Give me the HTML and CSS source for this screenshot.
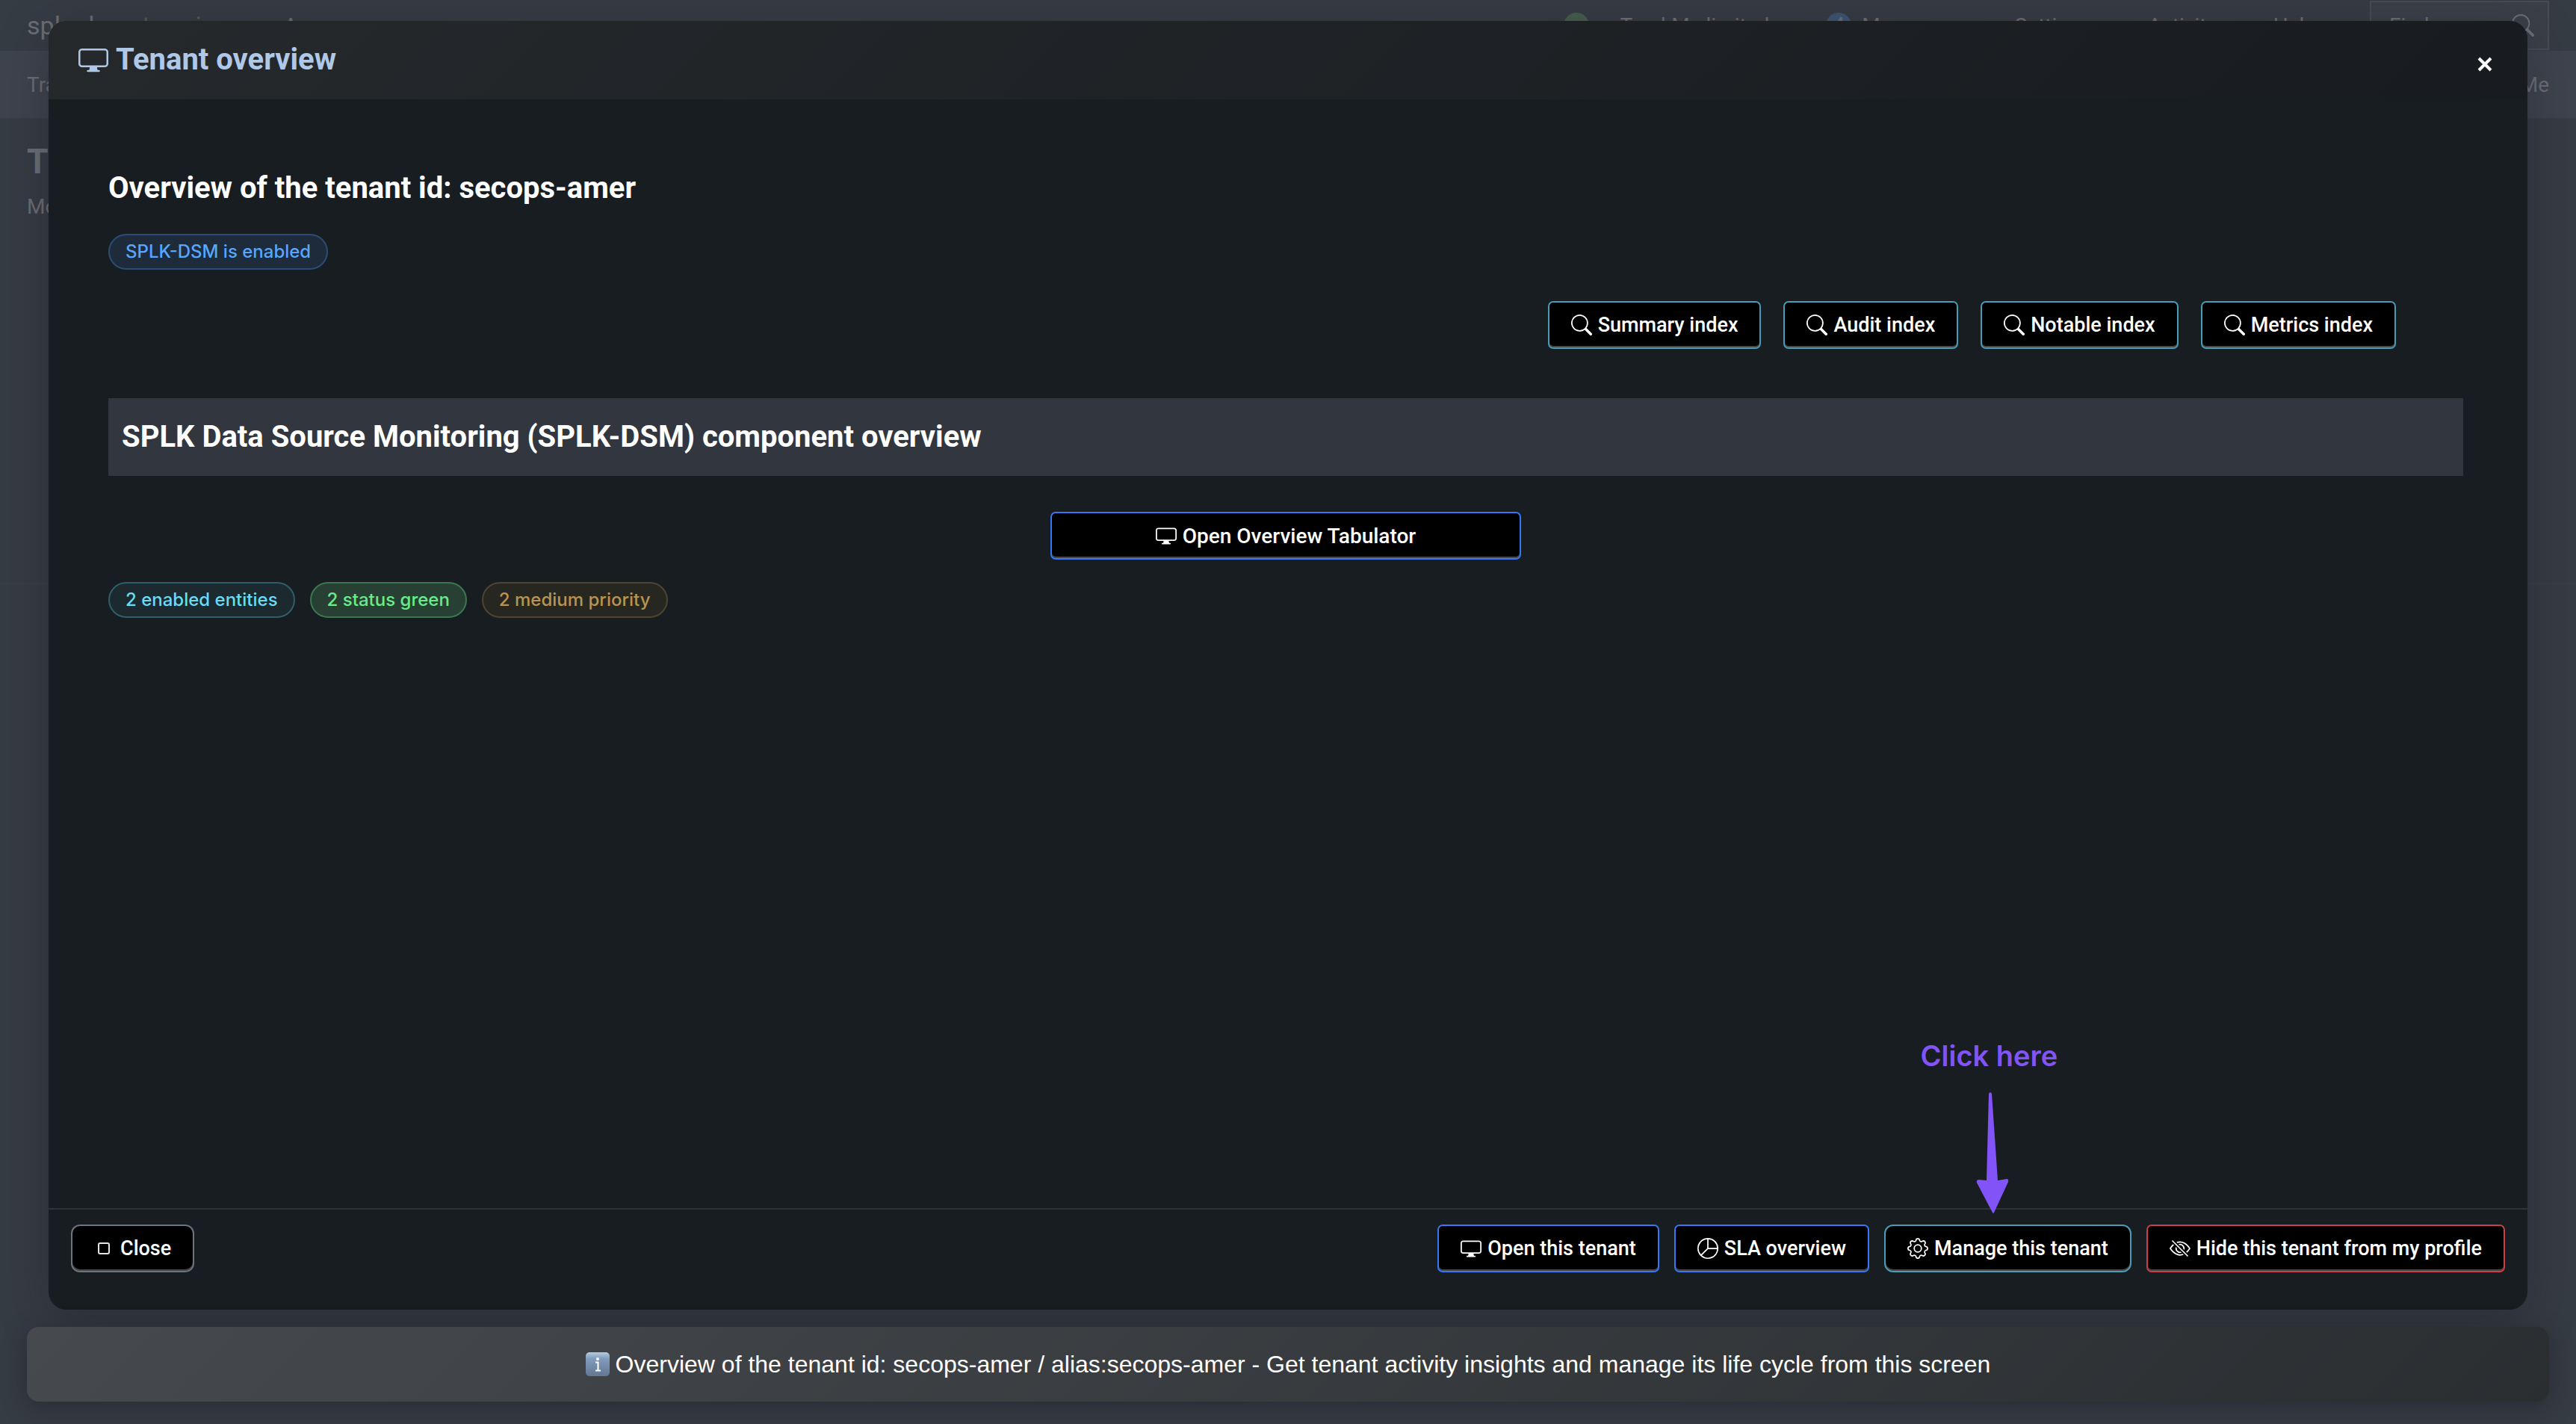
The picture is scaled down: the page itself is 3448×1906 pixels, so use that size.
FILE: index.html
```html
<!DOCTYPE html>
<html lang="en">
<head>
<meta charset="utf-8">
<title>Tenant overview</title>
<link rel="stylesheet" href="styles.css">
</head>
<body>
<svg class="sprite" aria-hidden="true">
  <symbol id="display" viewBox="0 0 16 16"><path d="M0 4s0-2 2-2h12s2 0 2 2v6s0 2-2 2h-4q0 1 .25 1.5H11a.5.5 0 0 1 0 1H5a.5.5 0 0 1 0-1h.75Q6 13 6 12H2s-2 0-2-2zm1.398-.855a.8.8 0 0 0-.254.302A1.5 1.5 0 0 0 1 4.01V10c0 .325.078.502.145.602q.105.156.302.254a1.5 1.5 0 0 0 .538.143L2.01 11H14c.325 0 .502-.078.602-.145a.8.8 0 0 0 .254-.302 1.5 1.5 0 0 0 .143-.538L15 9.99V4c0-.325-.078-.502-.145-.602a.8.8 0 0 0-.302-.254A1.5 1.5 0 0 0 13.99 3H2c-.325 0-.502.078-.602.145"/></symbol>
  <symbol id="search" viewBox="0 0 16 16"><path d="M11.742 10.344a6.5 6.5 0 1 0-1.397 1.398h-.001q.044.06.098.115l3.85 3.85a1 1 0 0 0 1.415-1.414l-3.85-3.85a1 1 0 0 0-.115-.1zM12 6.5a5.5 5.5 0 1 1-11 0 5.5 5.5 0 0 1 11 0"/></symbol>
  <symbol id="pie" viewBox="0 0 16 16"><path d="M7.5 1.018a7 7 0 0 0-4.79 11.566L7.5 7.793zm1 0V7.5h6.482A7 7 0 0 0 8.5 1.018M14.982 8.5H8.207l-4.79 4.79A7 7 0 0 0 14.982 8.5M0 8a8 8 0 1 1 16 0A8 8 0 0 1 0 8"/></symbol>
  <symbol id="gear" viewBox="0 0 16 16"><path d="M8 4.754a3.246 3.246 0 1 0 0 6.492 3.246 3.246 0 0 0 0-6.492M5.754 8a2.246 2.246 0 1 1 4.492 0 2.246 2.246 0 0 1-4.492 0"/><path d="M9.796 1.343c-.527-1.79-3.065-1.79-3.592 0l-.094.319a.873.873 0 0 1-1.255.52l-.292-.16c-1.64-.892-3.433.902-2.54 2.541l.159.292a.873.873 0 0 1-.52 1.255l-.319.094c-1.79.527-1.79 3.065 0 3.592l.319.094a.873.873 0 0 1 .52 1.255l-.16.292c-.892 1.64.901 3.434 2.541 2.54l.292-.159a.873.873 0 0 1 1.255.52l.094.319c.527 1.79 3.065 1.79 3.592 0l.094-.319a.873.873 0 0 1 1.255-.52l.292.16c1.64.893 3.434-.902 2.54-2.541l-.159-.292a.873.873 0 0 1 .52-1.255l.319-.094c1.79-.527 1.79-3.065 0-3.592l-.319-.094a.873.873 0 0 1-.52-1.255l.16-.292c.893-1.64-.902-3.433-2.541-2.54l-.292.159a.873.873 0 0 1-1.255-.52zm-2.633.283c.246-.835 1.428-.835 1.674 0l.094.319a1.873 1.873 0 0 0 2.693 1.115l.291-.16c.764-.415 1.6.42 1.184 1.185l-.159.292a1.873 1.873 0 0 0 1.116 2.692l.318.094c.835.246.835 1.428 0 1.674l-.319.094a1.873 1.873 0 0 0-1.115 2.693l.16.291c.415.764-.42 1.6-1.185 1.184l-.291-.159a1.873 1.873 0 0 0-2.693 1.116l-.094.318c-.246.835-1.428.835-1.674 0l-.094-.319a1.873 1.873 0 0 0-2.692-1.115l-.292.16c-.764.415-1.6-.42-1.184-1.185l.159-.291A1.873 1.873 0 0 0 1.945 8.93l-.319-.094c-.835-.246-.835-1.428 0-1.674l.319-.094A1.873 1.873 0 0 0 3.06 4.377l-.16-.292c-.415-.764.42-1.6 1.185-1.184l.292.159a1.873 1.873 0 0 0 2.692-1.115z"/></symbol>
  <symbol id="eye-slash" viewBox="0 0 16 16"><path d="M13.359 11.238C15.06 9.72 16 8 16 8s-3-5.500-8-5.500a7 7 0 0 0-2.790.588l.770.771A6 6 0 0 1 8 3.500c2.120 0 3.879 1.168 5.168 2.457A13 13 0 0 1 14.828 8q-.086.130-.195.288c-.335.480-.830 1.120-1.465 1.755q-.247.248-.517.486z"/><path d="M11.297 9.176a3.500 3.500 0 0 0-4.474-4.474l.823.823a2.500 2.500 0 0 1 2.829 2.829zm-2.943 1.299.822.822a3.500 3.500 0 0 1-4.474-4.474l.823.823a2.500 2.500 0 0 0 2.829 2.829"/><path d="M3.350 5.470q-.270.240-.518.487A13 13 0 0 0 1.172 8l.195.288c.335.480.830 1.120 1.465 1.755C4.121 11.332 5.881 12.500 8 12.500c.716 0 1.390-.133 2.020-.360l.770.772A7 7 0 0 1 8 13.500C3 13.500 0 8 0 8s.939-1.721 2.641-3.238l.708.709zm10.296 8.884-12-12 .708-.708 12 12z"/></symbol>
</svg>

<div class="page">
  <header class="topbar">
    <span class="brand">splunk<span class="brand-mark">&gt;</span><span class="brand-name">enterprise</span></span>
    <span class="apps">Apps</span>
    <nav class="topnav">
      <span class="dot dot-green"></span><span class="user">TrackMe limited</span>
      <span class="dot dot-blue">4</span><span class="messages">Messages</span>
      <span>Settings</span><span>Activity</span><span>Help</span>
    </nav>
    <label class="find"><input type="search" placeholder="Find" aria-label="Find"><svg><use href="#search"/></svg></label>
  </header>
  <div class="appbar"><span>Tra</span><span>TrackMe</span></div>
  <main class="backdrop">
    <h1>Tr</h1>
    <p>Mo</p>
    <hr>
  </main>
</div>

<section class="modal" role="dialog" aria-labelledby="modal-title">
  <header class="modal-head">
    <h2 id="modal-title"><svg><use href="#display"/></svg>Tenant overview</h2>
    <button class="dismiss" aria-label="Dismiss"><svg viewBox="0 0 20 20"><path d="M2 2 18 18M18 2 2 18"/></svg></button>
  </header>
  <div class="modal-body">
    <h3>Overview of the tenant id: secops-amer</h3>
    <div class="tags"><span class="tag tag-blue">SPLK-DSM is enabled</span></div>
    <div class="indexes">
      <button class="btn teal"><svg><use href="#search"/></svg>Summary index</button>
      <button class="btn teal"><svg><use href="#search"/></svg>Audit index</button>
      <button class="btn teal"><svg><use href="#search"/></svg>Notable index</button>
      <button class="btn teal"><svg><use href="#search"/></svg>Metrics index</button>
    </div>
    <h3 class="band">SPLK Data Source Monitoring (SPLK-DSM) component overview</h3>
    <button class="btn blue wide"><svg><use href="#display"/></svg>Open Overview Tabulator</button>
    <div class="tags">
      <span class="tag tag-cyan">2 enabled entities</span>
      <span class="tag tag-green">2 status green</span>
      <span class="tag tag-amber">2 medium priority</span>
    </div>
  </div>
  <footer class="modal-foot">
    <button class="btn grey round close"><i class="square"></i>Close</button>
    <button class="btn blue"><svg><use href="#display"/></svg>Open this tenant</button>
    <button class="btn blue"><svg><use href="#pie"/></svg>SLA overview</button>
    <div class="target">
      <button class="btn teal round"><svg><use href="#gear"/></svg>Manage this tenant</button>
      <div class="callout"><span>Click here</span><svg viewBox="-10 0 54 164"><path d="M17 3Q19-1 21 3L29 119 41 117Q44 117 43 121L24 162Q23 164 22 162L1 122Q0 118 4 118L14 119Z"/></svg></div>
    </div>
    <button class="btn red"><svg><use href="#eye-slash"/></svg>Hide this tenant from my profile</button>
  </footer>
</section>

<div class="notice" role="status">
  <svg class="info" viewBox="0 0 32 32"><defs><linearGradient id="glass" x2="0" y2="1"><stop offset="0" stop-color="#b9cbdc"/><stop offset=".25" stop-color="#829dbd"/><stop offset="1" stop-color="#627792"/></linearGradient></defs><rect width="32" height="32" rx="5" fill="url(#glass)"/><circle cx="16" cy="9" r="2" fill="#fff"/><path d="M13 13.500H16.500V24M13 24.500H20" fill="none" stroke="#fff" stroke-width="2"/></svg>
  <span>Overview of the tenant id: secops-amer / alias:secops-amer - Get tenant activity insights and manage its life cycle from this screen</span>
</div>
</body>
</html>
```
FILE: styles.css
```css
* { box-sizing: border-box; }
body {
  margin: 0;
  min-height: 100vh;
  background: #363c44;
  color: #fff;
  font-family: Roboto, "Liberation Sans", sans-serif;
  font-size: 28px;
  overflow: hidden;
}
h1, h2, h3, p { margin: 0; }
button, input { font: inherit; color: inherit; }
svg { fill: currentColor; flex: none; }
.sprite { display: none; }

.page { color: #6c7077; }
.topbar { display: flex; align-items: center; height: 68px; padding: 0 36px; background: #363c44; }
.brand { font-size: 34px; width: 344px; }
.brand-mark { color: #4a6152; }
.brand-name { color: #486251; }
.topnav { display: flex; align-items: center; margin-left: auto; gap: 76px; margin-right: 72px; }
.dot { width: 34px; height: 34px; border-radius: 50%; text-align: center; line-height: 34px; }
.dot-green { background: #465e4e; margin-right: -34px; }
.dot-blue { background: #3d5672; margin-right: -62px; }
.find { display: flex; align-items: center; width: 240px; height: 66px; padding: 0 18px 0 24px; border: 2px solid #484c56; background: #3b4048; }
.find input { flex: 1; min-width: 0; padding: 0; border: 0; background: none; }
.find input::placeholder { color: inherit; opacity: 1; }
.find svg { width: 30px; height: 30px; }
.appbar { display: flex; justify-content: space-between; align-items: center; height: 90px; padding: 0 36px; background: #3e444e; }
.backdrop { padding: 30px 36px; }
.backdrop h1 { font-size: 46px; line-height: 56px; }
.backdrop p { line-height: 36px; margin-top: 15px; }
.backdrop hr { margin: 485px -36px 0; border: 0; border-top: 2px solid #393f47; }

.modal {
  position: absolute;
  inset: 28px 65px 153px;
  display: flex;
  flex-direction: column;
  border-radius: 24px;
  background: #181d21;
  box-shadow: 0 16px 64px rgba(30, 26, 38, .4);
}
.modal-head {
  display: flex;
  justify-content: space-between;
  align-items: flex-start;
  height: 105px;
  padding: 26px 40px;
  border-radius: 24px 24px 0 0;
  background: linear-gradient(135deg, #25292c, #181c20);
}
.modal-head h2 { display: flex; align-items: center; gap: 10px; font-size: 40px; line-height: 52px; color: #b0c8e8; }
.modal-head svg { width: 40px; height: 40px; }
.modal-head .dismiss { padding: 4px; margin: 18px 3px; border: 0; background: none; line-height: 0; }
.modal-head .dismiss svg { width: 20px; height: 20px; fill: none; stroke: #fff; stroke-width: 4; }

.modal-body { flex: 1; padding: 91px 86px 0 80px; }
h3 { font-size: 40px; line-height: 56px; }
.tags { display: flex; gap: 20px; margin-top: 33px; }
.tag { height: 48px; padding: 0 21px; border: 2px solid; border-radius: 24px; font: 500 24px/44px Inter, sans-serif; }
.tag-blue { color: #58a6ff; background: #1d2b3b; border-color: #2a4d75; }
.tag-cyan { color: #68dcf4; background: #1c292f; border-color: #2f5f6b; }
.tag-green { color: #68eb8c; background: #284033; border-color: #3a7850; }
.tag-amber { color: #b89450; background: #272722; border-color: #4e4531; }
.indexes { display: flex; justify-content: flex-end; gap: 30px; margin-top: 42px; padding-right: 90px; }

.btn {
  display: inline-flex;
  align-items: center;
  justify-content: center;
  gap: 8px;
  height: 64px;
  padding: 0 29px;
  border: 2px solid;
  border-radius: 7px;
  background: #000;
  box-shadow: inset 0 -2px #48484b;
  color: #fff;
  font-size: 27px;
  font-weight: 500;
  white-space: nowrap;
}
.btn svg { width: 28px; height: 28px; }
.btn.teal { border-color: #489cb3; }
.btn.blue { border-color: #3478f6; }
.btn.red { border-color: #c93f45; }
.btn.grey { border-color: #6c757d; }
.btn.round { border-radius: 12px; }
.band { margin-top: 66px; padding: 24px 18px; background: #32363e; }
.wide { display: flex; width: 20%; margin: 48px auto 30px; font-size: 28px; }
.wide + .tags { margin-top: 0; }

.modal-foot { display: flex; align-items: flex-start; gap: 20px; height: 136px; padding: 20px 30px; border-top: 2px solid #303439; }
.close { margin-right: auto; }
.btn.close { padding: 0 29px 0 34px; gap: 14px; }
.square { width: 16px; height: 16px; border: 2px solid #e4e4e4; border-radius: 3px; }
.target { position: relative; }
.callout {
  position: absolute;
  left: 0;
  right: 50px;
  bottom: 78px;
  display: flex;
  flex-direction: column;
  align-items: center;
  gap: 24px;
  color: #8254f8;
  font: 600 38px/48px Inter, sans-serif;
  pointer-events: none;
}
.callout svg { width: 54px; height: 164px; }

.notice {
  position: absolute;
  left: 36px;
  right: 36px;
  bottom: 30px;
  display: flex;
  align-items: center;
  justify-content: center;
  gap: 8px;
  height: 100px;
  border-radius: 16px;
  background: linear-gradient(135deg, #46494d, #2b2e31);
  box-shadow: 0 8px 32px rgba(20, 20, 30, .4);
  font: 32px/40px "Liberation Sans", sans-serif;
}
.info { width: 32px; height: 32px; }
```
